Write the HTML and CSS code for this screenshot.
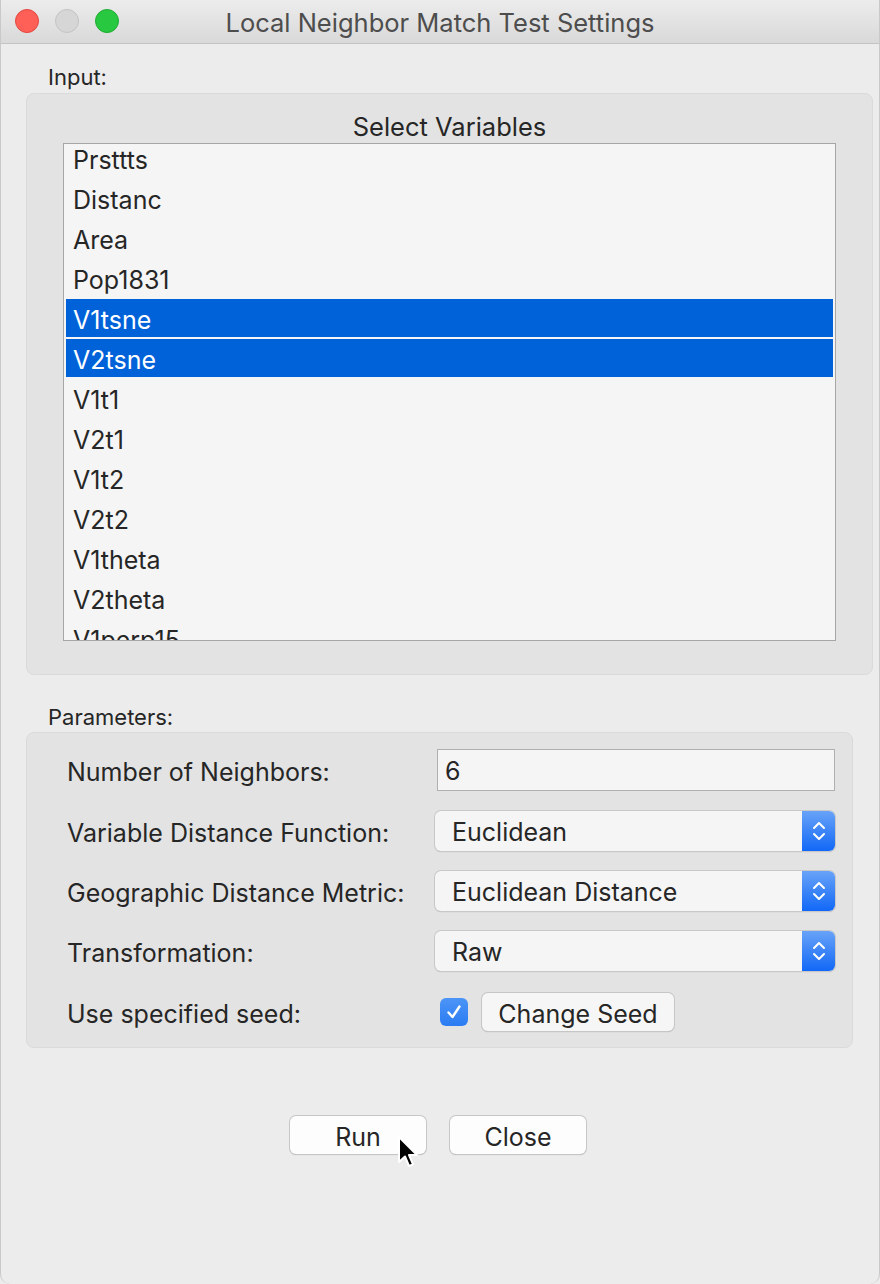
FILE: index.html
```html
<!DOCTYPE html>
<html lang="en">
<head>
    <meta charset="UTF-8">
    <meta name="viewport" content="width=device-width, initial-scale=1.0">
    <title>Local Neighbor Match Test Settings</title>
    <link rel="stylesheet" href="styles.css">
</head>
<body>
    <div class="window">
        <div class="titlebar">
            <div class="lights">
                <span class="light close"></span>
                <span class="light min"></span>
                <span class="light max"></span>
            </div>
            <div class="title">Local Neighbor Match Test Settings</div>
        </div>

        <div class="content">
            <div class="group-label">Input:</div>
            <div class="group input-group">
                <div class="list-title">Select Variables</div>
                <div class="listbox">
                    <div class="list-items">
                        <div class="item">Prsttts</div>
                        <div class="item">Distanc</div>
                        <div class="item">Area</div>
                        <div class="item">Pop1831</div>
                        <div class="item selected">V1tsne</div>
                        <div class="item selected">V2tsne</div>
                        <div class="item">V1t1</div>
                        <div class="item">V2t1</div>
                        <div class="item">V1t2</div>
                        <div class="item">V2t2</div>
                        <div class="item">V1theta</div>
                        <div class="item">V2theta</div>
                        <div class="item">V1perp15</div>
                    </div>
                </div>
            </div>

            <div class="group-label params-label">Parameters:</div>
            <div class="group params-group">
                <div class="param-row first">
                    <div class="param-label">Number of Neighbors:</div>
                    <div class="textfield">6</div>
                </div>
                <div class="param-row">
                    <div class="param-label">Variable Distance Function:</div>
                    <div class="select">
                        <span class="select-value">Euclidean</span>
                        <span class="stepper">
                            <svg width="16" height="24" viewBox="0 0 16 24"><path d="M3 9 L8 4 L13 9 M3 15 L8 20 L13 15" fill="none" stroke="#fff" stroke-width="2" stroke-linecap="round" stroke-linejoin="round"/></svg>
                        </span>
                    </div>
                </div>
                <div class="param-row">
                    <div class="param-label">Geographic Distance Metric:</div>
                    <div class="select">
                        <span class="select-value">Euclidean Distance</span>
                        <span class="stepper">
                            <svg width="16" height="24" viewBox="0 0 16 24"><path d="M3 9 L8 4 L13 9 M3 15 L8 20 L13 15" fill="none" stroke="#fff" stroke-width="2" stroke-linecap="round" stroke-linejoin="round"/></svg>
                        </span>
                    </div>
                </div>
                <div class="param-row">
                    <div class="param-label">Transformation:</div>
                    <div class="select">
                        <span class="select-value">Raw</span>
                        <span class="stepper">
                            <svg width="16" height="24" viewBox="0 0 16 24"><path d="M3 9 L8 4 L13 9 M3 15 L8 20 L13 15" fill="none" stroke="#fff" stroke-width="2" stroke-linecap="round" stroke-linejoin="round"/></svg>
                        </span>
                    </div>
                </div>
                <div class="param-row seed-row">
                    <div class="param-label">Use specified seed:</div>
                    <div class="seed-controls">
                        <span class="checkbox">
                            <svg width="20" height="20" viewBox="0 0 20 20"><path d="M4.5 10.5 L8.5 15 L15.5 4.5" fill="none" stroke="#fff" stroke-width="2.4" stroke-linecap="round" stroke-linejoin="round"/></svg>
                        </span>
                        <button class="btn seed-btn">Change Seed</button>
                    </div>
                </div>
            </div>

            <div class="actions">
                <button class="btn action-btn">Run</button>
                <button class="btn action-btn">Close</button>
            </div>
        </div>

        <svg class="cursor" width="22" height="34" viewBox="0 0 22 34">
            <path d="M2 2 L2 27 L8 21.5 L12 31 L16 29.3 L12 20 L20 20 Z" fill="#000" stroke="#fff" stroke-width="2" stroke-linejoin="round"/>
        </svg>
    </div>
</body>
</html>
```

FILE: styles.css
```css
body {
    margin: 0;
    font-family: Inter, "Noto Sans", "Liberation Sans", sans-serif;
    color: #262626;
    background-color: #ececec;
}

.window {
    position: relative;
    width: 880px;
    height: 1284px;
    background-color: #ececec;
    border-radius: 0 0 10px 10px;
    overflow: hidden;
    box-sizing: border-box;
    border-left: 1px solid #c9c9c9;
    border-right: 1px solid #c9c9c9;
}

.titlebar {
    position: relative;
    height: 43px;
    display: flex;
    align-items: center;
    justify-content: center;
    background: linear-gradient(#ececec, #d9d9d9);
    border-bottom: 1px solid #c4c4c4;
}

.lights {
    position: absolute;
    left: 14px;
    top: 9px;
    display: flex;
    gap: 16px;
}

.light {
    width: 24px;
    height: 24px;
    border-radius: 50%;
    box-sizing: border-box;
}

.light.close {
    background-color: #fe5f57;
    border: 1px solid #e2463f;
}

.light.min {
    background-color: #d6d6d6;
    border: 1px solid #c3c3c3;
}

.light.max {
    background-color: #28c840;
    border: 1px solid #1fab32;
}

.title {
    font-size: 25.5px;
    color: #4d4d4d;
    margin-top: 1px;
}

.content {
    padding: 21px 0 0 25px;
}

.group-label {
    font-size: 22px;
    line-height: 24px;
    padding-left: 22px;
    margin-bottom: 4px;
}

.params-label {
    margin-top: 30px;
    margin-bottom: 3px;
}

.group {
    background-color: #e3e3e3;
    border: 1px solid #dadada;
    border-radius: 8px;
    box-sizing: border-box;
}

.input-group {
    width: 847px;
    height: 582px;
    padding: 18px 36px 0 36px;
}

.list-title {
    text-align: center;
    font-size: 25.5px;
    line-height: 30px;
    margin-bottom: 1px;
}

.listbox {
    height: 498px;
    background-color: #f5f5f5;
    border: 1px solid #a6a6a6;
    box-sizing: border-box;
    padding: 0 2px;
    overflow: hidden;
}

.list-items {
    margin-top: -5px;
}

.item {
    height: 38px;
    line-height: 42px;
    margin-bottom: 2px;
    padding-left: 7px;
    font-size: 25px;
    color: #262626;
}

.item.selected {
    background-color: #0062d9;
    color: #fff;
}

.params-group {
    width: 827px;
    height: 316px;
    padding: 16px 16px 0 40px;
}

.param-row {
    display: grid;
    grid-template-columns: 368px 400px;
    align-items: center;
    height: 40px;
    margin-top: 20px;
}

.param-row.first {
    height: 42px;
    margin-top: 0;
}

.param-row.seed-row {
    height: 40px;
    margin-top: 21px;
}

.param-label {
    font-size: 25px;
    padding-top: 3px;
}

.textfield {
    margin-left: 2px;
    height: 42px;
    box-sizing: border-box;
    border: 1px solid #b0b0b0;
    background-color: #f5f5f5;
    font-size: 25px;
    line-height: 42px;
    padding-left: 7px;
}

.select {
    display: flex;
    height: 40px;
    box-sizing: border-box;
    border-radius: 6px;
    background-color: #f5f5f5;
    box-shadow: 0 0 0 1px #c8c8c8, 0 1px 1px rgba(0, 0, 0, 0.25);
    overflow: hidden;
}

.select-value {
    flex: 1;
    font-size: 25px;
    line-height: 43px;
    padding-left: 17px;
}

.stepper {
    width: 33px;
    display: flex;
    align-items: center;
    justify-content: center;
    background: linear-gradient(#68a3f8, #1268f7);
}

.seed-controls {
    display: flex;
    align-items: center;
    gap: 14px;
    margin-left: 5px;
}

.checkbox {
    width: 28px;
    height: 28px;
    border-radius: 6px;
    background: linear-gradient(#4c95f7, #2b7cf3);
    display: flex;
    align-items: center;
    justify-content: center;
}

.btn {
    font-family: Inter, "Noto Sans", "Liberation Sans", sans-serif;
    font-size: 25px;
    color: #262626;
    background-color: #f6f6f6;
    border: none;
    border-radius: 6px;
    box-shadow: 0 0 0 1px #c6c6c6, 0 1px 1px rgba(0, 0, 0, 0.25);
    padding: 3px 0 0;
}

.seed-btn {
    width: 192px;
    height: 38px;
}

.actions {
    display: flex;
    justify-content: center;
    gap: 24px;
    margin-top: 68px;
    padding-right: 29px;
}

.action-btn {
    width: 136px;
    height: 38px;
    background-color: #fdfdfd;
}

.cursor {
    position: absolute;
    left: 396px;
    top: 1135px;
}
```
